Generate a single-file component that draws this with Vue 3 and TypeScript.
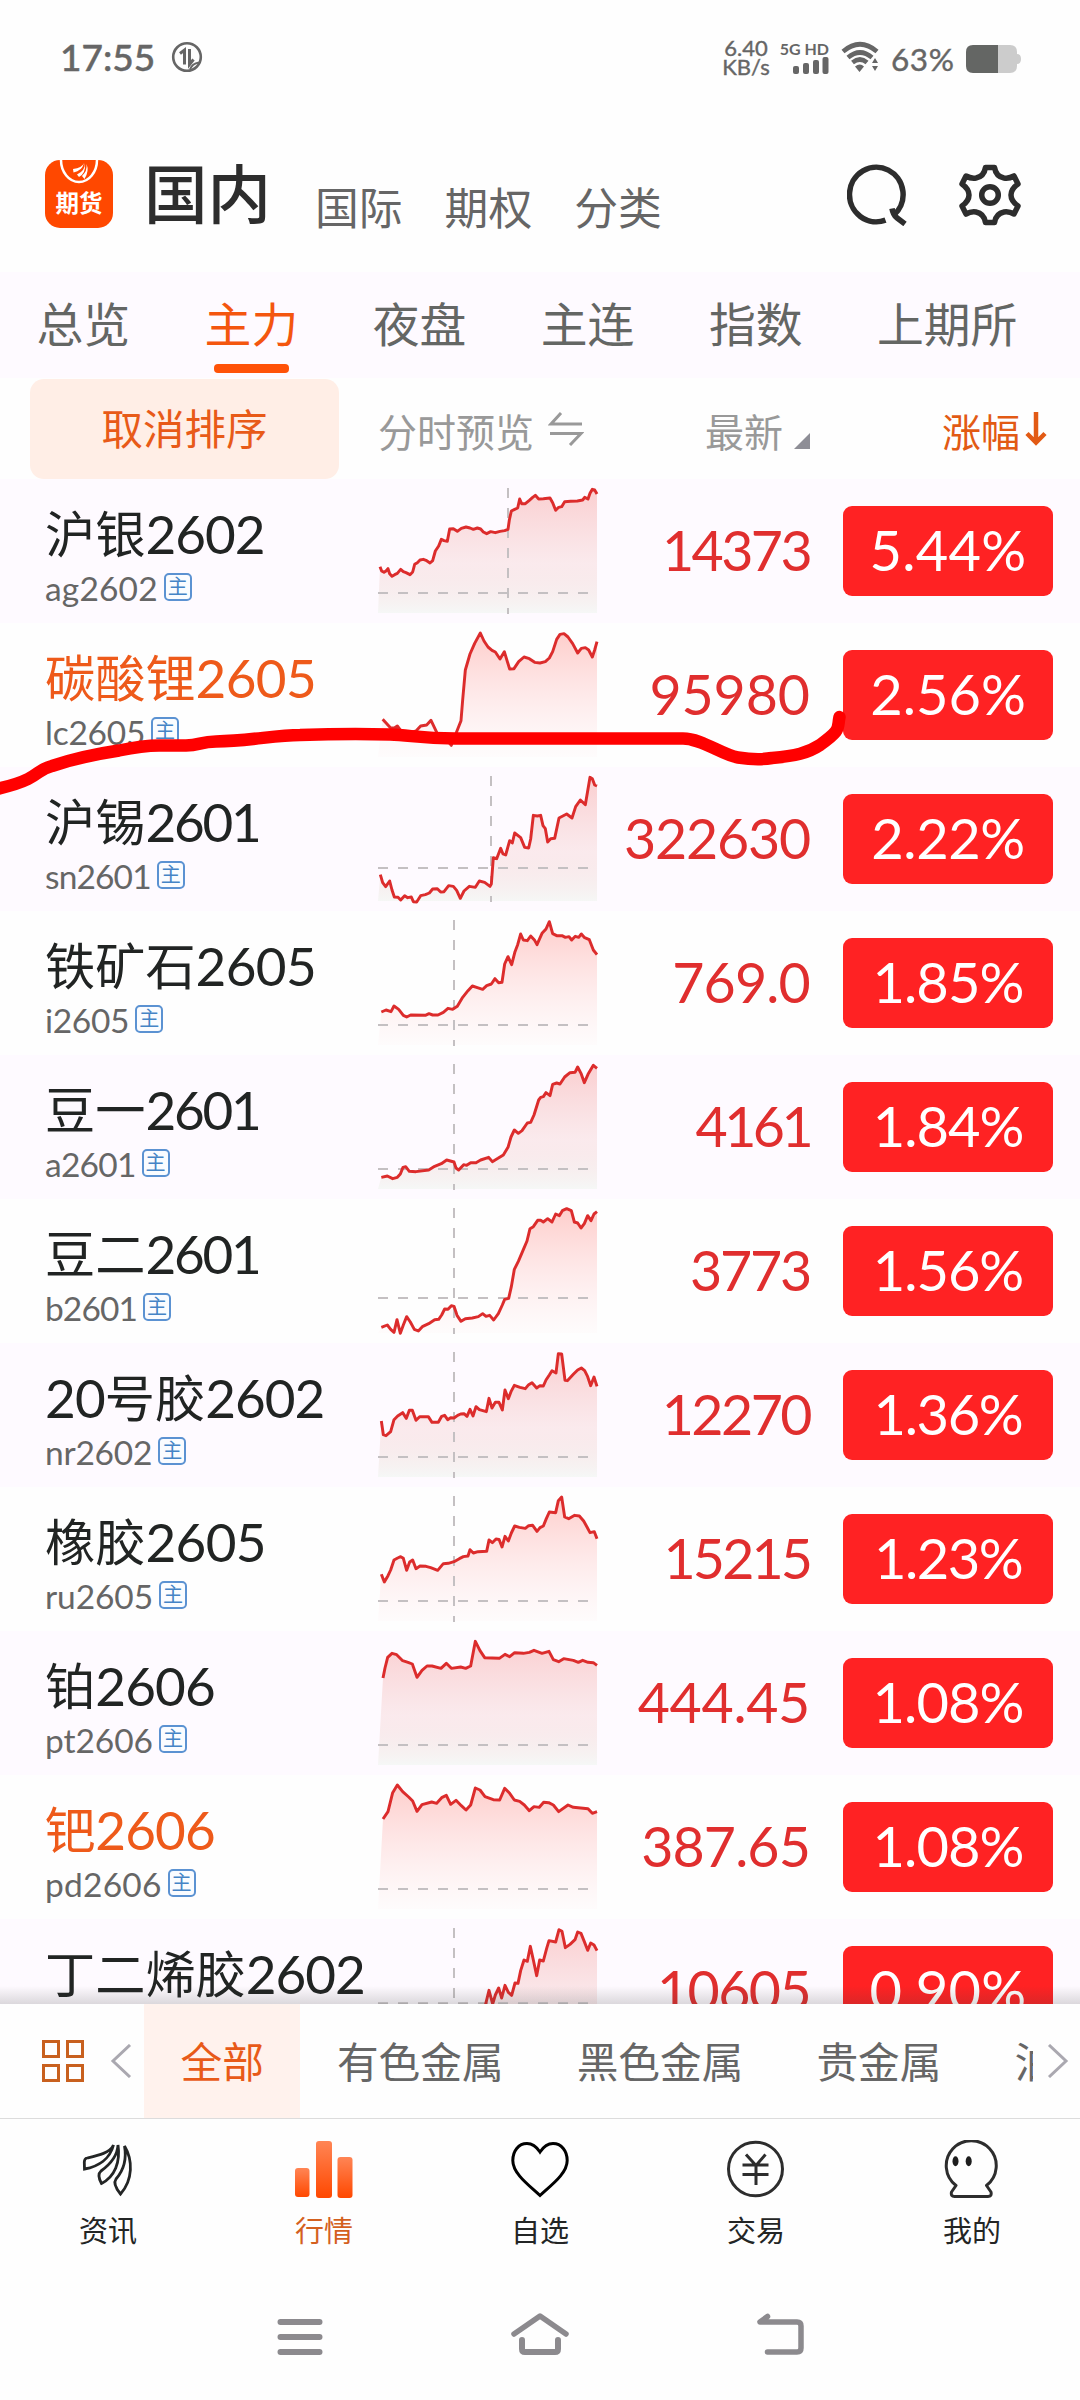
<script setup lang="ts">
interface Quote {
  name: string
  code: string
  price: string
  pct: string
  hot?: boolean
  /** vertical session divider and previous-settlement level, in chart units */
  vx?: number
  hy?: number
  /** chart-space y of the row's top edge */
  top: number
  line: string
}

const quotes: Quote[] = [
  { name: '沪银2602', code: 'ag2602', price: '14373', pct: '5.44%', vx: 444, hy: 369, top: 27,
    line: '60,290 65,303 72,307 78,303 84,296 89,311 96,319 104,314 112,310 122,298 130,305 138,308 150,314 158,306 164,283 172,278 180,270 190,268 198,271 210,279 218,272 226,243 236,228 244,208 252,212 262,214 269,177 280,176 292,184 304,175 318,171 330,174 340,178 352,174 362,177 370,186 380,191 392,185 406,188 420,184 434,182 444,178 448,150 454,123 464,118 473,114 479,87 485,101 496,101 508,91 518,82 526,76 536,87 550,86 570,84 578,98 587,121 596,112 605,110 614,95 632,94 652,93 668,90 674,82 684,87 690,70 697,58 704,60 711,72' },
  { name: '碳酸锂2605', code: 'lc2605', price: '95980', pct: '2.56%', hot: true, top: 459,
    line: '68,748 92,774 103,774 112,768 122,781 145,790 168,783 182,768 200,765 213,751 232,791 252,800 274,826 290,785 303,752 308,690 316,600 330,552 344,520 361,489 372,513 384,531 396,541 406,546 420,567 433,545 440,568 449,597 462,596 476,575 492,561 508,566 524,577 540,579 556,575 568,564 578,545 590,508 600,493 612,491 624,501 638,521 653,549 664,535 676,533 686,540 697,561 704,540 711,515' },
  { name: '沪锡2601', code: 'sn2601', price: '322630', pct: '2.22%', vx: 393, hy: 324, top: 21,
    line: '61,344 68,368 77,380 89,363 96,390 103,411 114,412 122,420 134,407 143,413 154,411 160,425 170,426 182,407 196,404 208,399 218,387 232,386 242,396 252,395 266,377 280,379 290,391 301,415 312,393 328,379 346,382 358,363 374,367 390,379 394,372 400,293 410,296 422,265 429,282 437,285 449,242 457,249 464,219 482,233 494,262 506,264 512,237 520,166 532,168 542,166 549,197 556,206 563,246 572,236 584,235 597,174 620,162 636,174 647,140 661,120 676,134 690,52 697,56 704,75 711,78' },
  { name: '铁矿石2605', code: 'i2605', price: '769.0', pct: '1.85%', vx: 282, hy: 795, top: 453,
    line: '64,756 78,750 93,755 102,738 116,748 130,766 140,771 152,765 196,766 207,761 218,765 234,765 250,757 264,745 278,748 292,739 308,712 324,692 337,678 352,683 368,688 380,677 394,672 405,656 416,668 426,667 434,612 444,590 455,614 465,575 473,554 482,522 490,540 502,542 512,528 524,541 531,554 546,520 558,507 568,485 578,521 590,527 606,527 616,532 627,530 635,540 646,529 656,532 664,522 674,533 688,539 700,570 711,584' },
  { name: '豆一2601', code: 'a2601', price: '4161', pct: '1.84%', vx: 282, hy: 357, top: 15,
    line: '64,382 82,378 98,386 112,382 121,372 129,352 137,350 148,364 168,365 206,360 224,349 244,341 260,330 282,336 288,354 296,360 311,344 320,346 332,338 348,338 362,330 386,322 397,335 414,325 430,315 444,292 453,261 463,240 475,250 486,242 502,219 512,217 522,195 536,150 542,142 550,140 558,128 570,137 578,103 590,99 600,102 614,81 630,68 645,67 653,51 663,70 673,98 684,73 700,46 711,55' },
  { name: '豆二2601', code: 'b2601', price: '3773', pct: '1.56%', vx: 282, hy: 744, top: 447,
    line: '64,832 82,825 92,838 102,847 111,809 121,850 130,825 140,800 151,816 163,838 175,843 187,830 206,821 224,809 236,808 245,795 254,777 264,778 274,767 282,769 291,796 303,814 316,806 337,804 355,800 368,791 378,799 389,796 401,810 415,791 427,765 434,748 446,745 454,710 463,658 475,634 490,599 501,573 510,536 520,530 533,511 542,511 550,516 563,506 576,516 587,492 598,497 607,482 620,476 634,482 643,516 653,519 663,534 673,521 683,497 693,512 702,492 711,485' },
  { name: '20号胶2602', code: 'nr2602', price: '12270', pct: '1.36%', vx: 282, hy: 351, top: 9,
    line: '64,243 70,284 78,287 92,275 102,239 113,228 128,218 139,235 148,211 157,211 168,241 179,230 205,230 216,247 235,247 245,229 254,226 263,239 272,233 282,234 293,226 302,222 312,221 321,229 330,208 339,228 348,200 358,209 379,215 387,175 396,204 406,187 417,187 427,210 435,150 445,176 453,155 463,136 480,142 496,146 506,134 516,128 530,144 540,137 550,138 558,120 568,105 576,92 588,99 595,41 605,42 615,121 622,122 640,103 653,90 664,84 674,92 683,110 692,137 702,111 711,139' },
  { name: '橡胶2605', code: 'ru2605', price: '15215', pct: '1.23%', vx: 282, hy: 783, top: 441,
    line: '64,703 73,726 84,707 92,690 102,660 113,654 122,650 130,655 140,691 149,666 158,660 168,686 180,678 198,679 212,683 233,691 250,671 265,670 282,665 298,656 310,650 324,648 330,629 340,639 354,635 380,634 387,600 397,608 408,597 417,598 426,621 435,589 445,603 454,579 464,558 478,562 496,565 506,557 518,556 531,574 540,563 550,558 559,536 568,516 587,518 595,482 605,471 614,531 626,536 644,526 658,528 671,543 681,561 690,578 703,575 711,596' },
  { name: '铂2606', code: 'pt2606', price: '444.45', pct: '1.08%', hy: 375, top: 33,
    line: '69,174 75,144 83,112 96,100 110,104 128,122 144,127 157,132 171,172 186,151 201,138 216,138 243,145 259,130 274,145 302,141 317,145 332,138 346,64 360,92 374,113 418,115 435,103 449,110 464,98 490,100 508,97 522,91 546,100 567,94 580,119 596,125 611,116 640,121 655,127 668,121 684,127 700,128 711,136' },
  { name: '钯2606', code: 'pd2606', price: '387.65', pct: '1.08%', hot: true, hy: 807, top: 465,
    line: '69,597 84,575 98,518 112,495 128,515 146,531 158,543 171,574 186,554 215,546 230,550 245,533 259,526 272,553 288,541 304,557 318,570 332,555 346,504 360,510 375,530 400,539 419,540 434,505 449,520 463,540 479,544 493,555 508,572 522,560 538,562 551,547 566,548 580,555 596,575 624,555 640,562 684,566 697,580 711,575' },
  { name: '丁二烯胶2602', code: 'br2602', price: '10605', pct: '0.90%', vx: 282, hy: 1150, top: 897,
    line: '60,1270 120,1240 180,1225 250,1210 320,1195 360,1190 377,1152 387,1111 398,1152 406,1125 416,1104 425,1134 435,1096 445,1117 455,1126 465,1089 474,1090 482,1052 492,1020 502,1024 511,979 520,1020 530,1067 539,1020 550,1023 560,985 567,962 587,966 597,929 606,934 616,983 630,973 645,959 653,936 663,940 673,965 683,991 692,969 702,975 711,992' },
]

const areaOf = (q: Quote): string => {
  const bottom = q.top + 402
  return `54,${bottom} ${q.line} 711,${bottom}`
}

const parts = (name: string): string[] => name.split(/(\d+)/).filter(Boolean)
const isNum = (s: string): boolean => /^\d+$/.test(s)

// Optical width corrections, in thousandths of an em, spread over the string
// so that narrow figures such as 1 and 7 do not look loosely spaced.
const trim: Record<string, number> = {
  '1': -118, '7': -52, '2': -26, '3': -28, '4': -8, '6': -14, '0': -6,
  '%': 40, a: 50, g: 50, p: 50, d: 50, b: 30, n: 10, r: 20, u: 10,
}
const tracking = (s: string): { letterSpacing: string } => {
  const sum = [...s].reduce((t, c) => t + (trim[c] ?? 0), 0)
  return { letterSpacing: `${(sum / s.length / 1000).toFixed(4)}em` }
}

const tabs = ['总览', '主力', '夜盘', '主连', '指数', '上期所']
const sectors = ['全部', '有色金属', '黑色金属', '贵金属', '油脂']
</script>

<template>
  <div class="app">
    <div class="status">
      <span class="clock">17:55</span>
      <svg class="nfc" width="32" height="32" viewBox="0 0 32 32" fill="none" stroke="#666" stroke-width="2.600">
        <circle cx="16" cy="16" r="13.800" />
        <path d="M9 12.500 13.500 9v14.500M18.500 8v15.500l4-5" stroke-width="3" />
        <path d="M19 28.500q2-6 9-7" stroke-width="2" />
      </svg>
      <div class="rate"><span>6.40</span><span>KB/s</span></div>
      <div class="cell">
        <span>5G HD</span>
        <svg width="36" height="17" viewBox="0 0 36 17" fill="#666">
          <rect x="0" y="9" width="6" height="8" rx="2" /><rect x="10" y="6" width="6" height="11" rx="2" />
          <rect x="20" y="3" width="6" height="14" rx="2" /><rect x="29.500" y="0" width="6" height="17" rx="2" />
        </svg>
      </div>
      <svg class="wifi" width="38" height="32" viewBox="0 0 38 32">
        <g fill="none" stroke="#666" stroke-width="4.600">
          <path d="M2 10.500Q19-4 36 10.500" /><path d="M7 16.500Q19 6.500 31 16.500" /><path d="M11.500 21.500Q19 15.500 26 21.500" />
        </g>
        <path d="M14 25.500q5-4 9 0L18.500 31zM31 22l3-5 3 5zM31 25l3 5 3-5z" fill="#666" />
      </svg>
      <span class="power">63%</span>
      <svg class="battery" width="56" height="28" viewBox="0 0 56 28">
        <path d="M7 0h37q7 0 7 7v2q4 0 4 5t-4 5v2q0 7-7 7H7z" fill="#ccc" />
        <path d="M7 0h25v28H7q-7 0-7-7V7q0-7 7-7z" fill="#646664" />
      </svg>
    </div>

    <header class="head">
      <div class="logo">
        <svg width="68" height="30" viewBox="0 0 68 30">
          <path d="M16 0C16 12 24 22 34 22S52 12 52 0" fill="none" stroke="#fff" stroke-width="2.500" />
          <path d="M39 3Q37 8 28 9l.5 3.500Q37 11 39 3zM40 3Q40 11 32 14.500l2 2.500Q41 13 40 3zM41.500 4q1 7-4.500 12l2.500 3q5-8 2-15z" fill="#fff" />
        </svg>
        <span>期货</span>
      </div>
      <h1>国内</h1>
      <nav class="markets"><span>国际</span><span>期权</span><span>分类</span></nav>
      <svg class="search" width="64" height="64" viewBox="0 0 64 64" fill="none" stroke="#2d2d2d" stroke-width="5.500">
        <path d="M38.500 58.200A26.800 27.300 0 1 1 46.500 53.500" />
        <path d="M45 46.500q1 6 4.500 9l8.500 6.500" />
      </svg>
      <svg class="gear" width="64" height="64" viewBox="0 0 64 64" fill="none" stroke="#2d2d2d" stroke-width="5.500" stroke-linejoin="round">
        <path d="M27.500 4.500h9q1.500 9 9.500 10.500 5 .8 10-2l4 8q-7 5-7 11t7 11l-4 8q-5-2.800-10-2-8 1.500-9.500 10.500h-9q-1.500-9-9.500-10.500-5-.8-10 2l-4-8q7-5 7-11t-7-11l4-8q5 2.800 10 2 8-1.500 9.500-10.500z" />
        <circle cx="32" cy="32" r="8.300" />
      </svg>
    </header>

    <nav class="tabs">
      <span v-for="(t, i) in tabs" :key="t" :class="{ on: i === 1 }">{{ t }}</span>
    </nav>

    <div class="sort">
      <button class="cancel">取消排序</button>
      <span class="preview">分时预览</span>
      <svg class="swap" width="36" height="34" viewBox="0 0 36 34" fill="none" stroke="#999" stroke-width="3">
        <path d="M13 1 3 12h31M2 21.500h31L22 33" />
      </svg>
      <span class="latest">最新</span>
      <svg class="tri" width="16" height="16" viewBox="0 0 16 16"><path d="M16 0v16H0z" fill="#8e8e96" /></svg>
      <span class="change">涨幅</span>
      <svg class="down" width="22" height="34" viewBox="0 0 22 34" fill="none" stroke="#e25a14" stroke-width="4.500">
        <path d="M11 0v30M2 21.500l9 9 9-9" />
      </svg>
    </div>

    <main class="list">
      <svg class="defs" width="0" height="0">
        <defs>
          <linearGradient id="fade" x1="0" y1="0" x2="0" y2="1">
            <stop offset="0" stop-color="#ff3c32" stop-opacity=".25" />
            <stop offset="1" stop-color="#ff8c96" stop-opacity=".02" />
          </linearGradient>
          <linearGradient id="fadeAlt" x1="0" y1="0" x2="0" y2="1">
            <stop offset="0" stop-color="#f03c32" stop-opacity=".23" />
            <stop offset=".6" stop-color="#e07468" stop-opacity=".12" />
            <stop offset="1" stop-color="#dcf0dc" stop-opacity=".25" />
          </linearGradient>
        </defs>
      </svg>
      <div v-for="(q, i) in quotes" :key="q.code" class="row" :class="{ tint: i % 2 === 0 }">
        <div class="who">
          <div class="name" :class="{ hot: q.hot }">
            <template v-for="(p, k) in parts(q.name)" :key="k">
              <span v-if="isNum(p)" class="num" :style="tracking(p)">{{ p }}</span>
              <span v-else>{{ p }}</span>
            </template>
          </div>
          <div class="code"><span :style="tracking(q.code)">{{ q.code }}</span><i>主</i></div>
        </div>
        <svg class="chart" width="222" height="144" viewBox="54 0 666 432">
          <g :transform="`translate(0 ${-q.top})`">
            <polygon :points="areaOf(q)" :fill="i % 2 ? 'url(#fade)' : 'url(#fadeAlt)'" />
            <g stroke="#c4c0c2" stroke-width="6" stroke-dasharray="30">
              <path v-if="q.hy" :d="`M54 ${q.hy}H711`" />
              <path v-if="q.vx" :d="`M${q.vx} ${q.top + 27}V${q.top + 405}`" />
            </g>
            <polyline :points="q.line" fill="none" stroke="#dc2c2c" stroke-width="8.800" stroke-linejoin="round" />
          </g>
        </svg>
        <div class="price"><span :style="tracking(q.price)">{{ q.price }}</span></div>
        <div class="pct"><span :style="tracking(q.pct)">{{ q.pct }}</span></div>
      </div>
      <div class="shade"></div>
      <svg class="marker" width="1080" height="120" viewBox="0 690 1080 120">
        <path d="M-8 790Q16 785 28 779C40 773 40 769 52 766Q82 756 119 750.500Q145 745 162 745.500H186C200 745 200 742 216 741.500C250 741 275 735 300 735Q348 733.500 390 734.500C410 735 420 738.500 455 738.500H683C702 738.500 722 755 738 757.500Q758 760.500 772 758C795 756 808 753 820 745C842 729 837 729 839.500 717" fill="none" stroke="#f00" stroke-width="12.500" stroke-linecap="round" />
      </svg>
    </main>

    <div class="filter">
      <svg class="grid" width="42" height="42" viewBox="0 0 42 42" fill="none" stroke="#c8601e" stroke-width="3">
        <path d="M1.500 1.500h15v15h-15zM25.500 1.500h15v15h-15zM1.500 25.500h15v15h-15zM25.500 25.500h15v15h-15z" />
      </svg>
      <svg class="prev" width="22" height="34" viewBox="0 0 22 34" fill="none" stroke="#aaa8b0" stroke-width="3"><path d="M20 1 3 17l17 16" /></svg>
      <div class="sectors">
        <span v-for="(s, i) in sectors" :key="s" :class="{ on: i === 0 }">{{ s }}</span>
      </div>
      <svg class="next" width="22" height="34" viewBox="0 0 22 34" fill="none" stroke="#aaa8b0" stroke-width="3"><path d="m2 1 17 16L2 33" /></svg>
    </div>

    <nav class="dock">
      <div>
        <svg width="60" height="60" viewBox="0 0 60 60" fill="none" stroke="#232525" stroke-width="2.800">
          <path d="M35.500 5C32 13 20 15.500 9 18Q6.500 18.500 6.300 22L6.500 29C20 26.500 32 19 35.500 5zM40 5C39.500 15 34 23 23 31 19.500 34 20.500 38 23.500 43.500 37 36.500 42.500 22 40 5zM46.500 6C49 20 45 31 38 39 35.500 42.500 38 48.500 42.500 54 55 40 55 20 46.500 6z" />
        </svg>
        <span>资讯</span>
      </div>
      <div class="on">
        <svg width="60" height="60" viewBox="0 0 60 60">
          <defs><linearGradient id="bar" x1="0" y1="0" x2="0" y2="1"><stop offset="0" stop-color="#ff8555" /><stop offset="1" stop-color="#ff4800" /></linearGradient></defs>
          <g fill="url(#bar)"><rect x="1" y="28" width="14.500" height="29" rx="3" /><rect x="22" y="1" width="16" height="57" rx="3" /><rect x="43.500" y="17" width="15" height="41" rx="3" /></g>
        </svg>
        <span>行情</span>
      </div>
      <div>
        <svg width="60" height="60" viewBox="0 0 60 60" fill="none" stroke="#000" stroke-width="3">
          <path d="M30 12C26 6 21.500 3.500 17 3.500 8.500 3.500 2.800 11 2.800 20.500 2.800 34 20 46 30 55.500 40 46 57.200 34 57.200 20.500 57.200 11 51.500 3.500 43 3.500 38.500 3.500 34 6 30 12z" />
        </svg>
        <span>自选</span>
      </div>
      <div>
        <svg width="60" height="60" viewBox="0 0 60 60" fill="none" stroke="#2d2d2d" stroke-width="3">
          <ellipse cx="29.500" cy="29" rx="27" ry="26.800" />
          <path d="m20 14.500 10 11 9.500-11M16.500 25h26M16.500 34.500h26M30 25v20" />
        </svg>
        <span>交易</span>
      </div>
      <div>
        <svg width="60" height="60" viewBox="0 0 60 60" fill="none" stroke="#2d2d2d" stroke-width="3" stroke-linejoin="round">
          <path d="M14 45.500A25 25 0 1 1 44.500 45.500L49 52Q50 56.500 46 56.500H12.500Q8.500 56.500 9.500 52z" />
          <g fill="#1e1e1e" stroke="none"><ellipse cx="13.500" cy="21.300" rx="3" ry="5" /><ellipse cx="26.700" cy="21.300" rx="3" ry="5" /></g>
        </svg>
        <span>我的</span>
      </div>
    </nav>

    <div class="system">
      <svg width="60" height="50" viewBox="0 0 60 50" fill="none" stroke="#8c8a8e" stroke-width="6" stroke-linecap="round"><path d="M10.500 12h39M10.500 27h39M10.500 42h39" /></svg>
      <svg width="60" height="50" viewBox="0 0 60 50" fill="none" stroke="#8c8a8e" stroke-width="6" stroke-linecap="round"><path d="M4 24 30 6l26 18" stroke-linejoin="round" stroke-width="5.500" /><path d="M12 30v9q0 3 3 3h30q3 0 3-3v-9" /></svg>
      <svg width="60" height="50" viewBox="0 0 60 50" fill="none" stroke="#8c8a8e" stroke-width="5.500" stroke-linecap="round" stroke-linejoin="round"><path d="M17.500 6.500 10 12h37q4 0 4 4v22q0 4-4 4H17.500" /></svg>
    </div>
  </div>
</template>

<style>
body {
  background: #fff;
}
</style>

<style scoped>
.app {
  width: 1080px;
  height: 2400px;
  overflow: hidden;
  background: #fefefe;
  font-family: Lato, 'Noto Sans CJK SC', sans-serif;
  display: flex;
  flex-direction: column;
}
svg {
  display: block;
  flex: none;
}
span {
  white-space: nowrap;
}
.status {
  height: 114px;
  flex: none;
  display: flex;
  align-items: center;
  color: #666;
  padding: 0 0 0 60px;
}
.clock {
  font-size: 37px;
  font-weight: 500;
  -webkit-text-stroke: 0.5px #666;
  line-height: 40px;
  width: 111px;
}
.rate {
  margin-left: 517px;
  width: 52px;
  display: flex;
  flex-direction: column;
  align-items: center;
  font-size: 22px;
  line-height: 19px;
  -webkit-text-stroke: 0.4px #666;
}
.rate span {
  height: 19px;
}
.cell {
  width: 50px;
  margin-left: 7px;
  display: flex;
  flex-direction: column;
  align-items: flex-end;
  font-size: 16px;
  font-weight: 700;
  line-height: 17px;
}
.wifi {
  margin-left: 12px;
}
.power {
  font-size: 31.5px;
  line-height: 34px;
  letter-spacing: 0.6px;
  -webkit-text-stroke: 0.4px #666;
  width: 75px;
  margin-left: 12px;
  padding-top: 4px;
}
.battery {
  margin-top: 3px;
}
.head {
  height: 158px;
  flex: none;
  display: flex;
  align-items: flex-start;
  padding: 46px 0 0 45px;
  box-sizing: border-box;
}
.logo {
  width: 68px;
  height: 68px;
  flex: none;
  border-radius: 15px;
  background: #ff4800;
  color: #fff;
  overflow: hidden;
  display: flex;
  flex-direction: column;
  align-items: center;
}
.logo span {
  font-size: 23.5px;
  font-weight: 700;
  line-height: 27px;
}
h1 {
  margin: 0 0 0 31px;
  font-size: 63.5px;
  font-weight: 500;
  line-height: 68px;
  color: #2d2d2d;
  width: 171px;
  flex: none;
}
.markets {
  display: flex;
  gap: 42px;
  font-size: 43.8px;
  line-height: 46px;
  color: #666;
  padding-top: 25px;
  width: 532px;
  flex: none;
}
.search {
  margin-top: 2px;
}
.gear {
  margin: 3px 0 0 47px;
}
.tabs {
  height: 106px;
  flex: none;
  background: #fefaff;
  display: flex;
  gap: 74.5px;
  padding-left: 36.5px;
  font-size: 46.8px;
  color: #646664;
}
.tabs span {
  line-height: 60px;
  margin-top: 22px;
  height: 79px;
  display: flex;
  flex-direction: column;
  align-items: center;
}
.tabs .on {
  color: #f4560f;
}
.tabs .on::after {
  content: '';
  width: 75px;
  height: 9px;
  border-radius: 4px;
  margin-top: 10px;
  background: #ff5208;
}
.sort {
  height: 101px;
  flex: none;
  display: flex;
  align-items: center;
  padding-left: 30px;
  font-size: 39px;
  color: #999;
}
.cancel {
  width: 309px;
  height: 100px;
  border: 0;
  padding: 0 0 4px;
  border-radius: 14px;
  background: #ffeee6;
  color: #e85a18;
  font: 41.5px Lato, 'Noto Sans CJK SC', sans-serif;
}
.preview {
  margin-left: 39px;
  width: 170px;
  padding-top: 3px;
}
.latest {
  margin-left: 121px;
  width: 89px;
  padding-top: 3px;
}
.tri {
  margin-top: 24px;
}
.change {
  margin-left: 132px;
  width: 83px;
  padding-top: 3px;
  color: #e25a14;
}
.list {
  height: 1525px;
  flex: none;
  position: relative;
  overflow: hidden;
}
.defs {
  position: absolute;
}
.row {
  height: 144px;
  display: flex;
  background: #fefefe;
}
.row.tint {
  background: #fefaff;
}
.who {
  width: 333px;
  margin-left: 45px;
  padding-top: 25px;
  flex: none;
}
.name {
  font-size: 50.2px;
  line-height: 60px;
  height: 60px;
  color: #212423;
  display: flex;
}
.name .num {
  font-size: 53px;
}
.name.hot {
  color: #ee5a1a;
}
.code {
  margin-top: 4px;
  display: flex;
  align-items: center;
  font-size: 33.5px;
  line-height: 40px;
  color: #666;
}
.code i {
  margin-left: 6px;
  width: 28px;
  height: 28px;
  margin-top: -2px;
  box-sizing: border-box;
  border: 2px solid #5b92d2;
  border-radius: 5px;
  font-style: normal;
  font-size: 20px;
  line-height: 23px;
  text-align: center;
  color: #4584c6;
  background: #fafcff;
}
.price {
  width: 210px;
  line-height: 142px;
  font-size: 55.5px;
  text-align: right;
  color: #e02e2e;
  white-space: nowrap;
}
.pct {
  margin: 27px 0 0 33px;
  width: 210px;
  height: 90px;
  border-radius: 9px;
  background: #ff2223;
  color: #fff;
  font-size: 56px;
  line-height: 88px;
  text-align: center;
}
.shade {
  position: absolute;
  left: 0;
  right: 0;
  bottom: 0;
  height: 18px;
  background: linear-gradient(rgba(60, 60, 60, 0), rgba(60, 60, 60, 0.18));
}
.marker {
  position: absolute;
  left: 0;
  top: 211px;
}
.filter {
  height: 114px;
  flex: none;
  display: flex;
  align-items: center;
  border-bottom: 1px solid #dcdcdc;
  padding-left: 42px;
}
.prev {
  margin-left: 26px;
}
.sectors {
  margin-left: 12px;
  width: 889px;
  height: 114px;
  overflow: hidden;
  display: flex;
  font-size: 41.7px;
  line-height: 116px;
  color: #666;
}
.sectors span {
  padding: 0 36.5px;
}
.sectors .on {
  background: #fff2ed;
  color: #e85a18;
}
.next {
  margin-left: 14px;
}
.dock {
  height: 146px;
  flex: none;
  display: grid;
  grid-template-columns: repeat(5, 1fr);
  padding-top: 21px;
  box-sizing: border-box;
  font-size: 29px;
  line-height: 40px;
  color: #232525;
}
.dock div {
  display: flex;
  flex-direction: column;
  align-items: center;
  gap: 11px;
}
.dock .on {
  color: #d4601e;
}
.system {
  display: flex;
  gap: 180px;
  padding: 45px 0 0 270px;
}
</style>
